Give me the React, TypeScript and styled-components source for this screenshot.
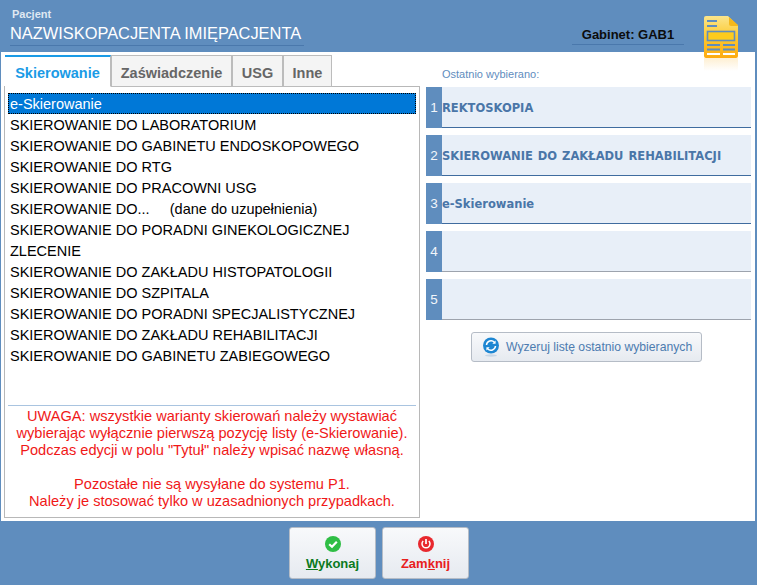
import React from 'react';
import styled, { createGlobalStyle } from 'styled-components';

const GlobalStyle = createGlobalStyle`
  html, body {
    margin: 0;
    padding: 0;
    background: #5f8dbe;
    font-family: "Liberation Sans", Arial, sans-serif;
  }
`;

const Page = styled.div`
  width: 757px;
  height: 585px;
  display: flex;
  flex-direction: column;
  overflow: hidden;
  background: #5f8dbe;
`;

const Header = styled.header`
  height: 52px;
  flex: none;
  display: flex;
  position: relative;
`;

const PatientBlock = styled.div`
  margin-left: 10px;
  width: 294px;
  display: flex;
  flex-direction: column;
`;

const PatientLabel = styled.div`
  font-size: 11px;
  font-weight: bold;
  color: #dfe8f2;
  margin: 8px 0 0 2px;
  line-height: 13px;
`;

const PatientName = styled.div`
  font-size: 16.4px;
  line-height: 20px;
  color: #fff;
  margin-top: 2px;
  height: 22px;
  border-bottom: 1px solid #4a78ac;
  white-space: nowrap;
`;

const Cabinet = styled.div`
  position: absolute;
  left: 572px;
  top: 25px;
  width: 112px;
  height: 19px;
  border-bottom: 1px solid #4a78ac;
  font-size: 13px;
  font-weight: bold;
  line-height: 19px;
  color: #0c0c0c;
  text-align: center;
`;

const DocIcon = styled.svg`
  position: absolute;
  left: 703px;
  top: 15px;
  width: 36px;
  height: 58px;
  z-index: 2;
`;

const Main = styled.main`
  height: 469px;
  flex: none;
  margin: 0 2px 0 1px;
  background: #fff;
  display: flex;
  padding: 3px 4px 3px 3px;
  box-sizing: border-box;
  gap: 6px;
`;

const LeftColumn = styled.section`
  width: 416px;
  flex: none;
  display: flex;
  flex-direction: column;
`;

const Tabs = styled.div`
  display: flex;
  height: 32px;
  flex: none;
  margin-bottom: -1px;
  position: relative;
  z-index: 1;
  padding-left: 1px;
`;

const Tab = styled.div<{ $active?: boolean; $width: number }>`
  width: ${(p) => p.$width}px;
  box-sizing: border-box;
  text-align: center;
  font-size: 14.5px;
  font-weight: bold;
  line-height: 28px;
  color: ${(p) => (p.$active ? '#1a9be6' : '#666')};
  background: ${(p) => (p.$active ? '#fff' : '#f4f4f4')};
  border: 1px solid #bcbcbc;
  border-left-width: ${(p) => (p.$active ? 0 : 1)}px;
  border-top: ${(p) => (p.$active ? '2px solid #1a9be6' : '1px solid #bcbcbc')};
  border-bottom: ${(p) => (p.$active ? '1px solid #fff' : '1px solid #bcbcbc')};
  padding-top: ${(p) => (p.$active ? 2 : 3)}px;
`;

const ListBox = styled.div`
  flex: 1;
  border: 1px solid #b8b8b8;
  display: flex;
  flex-direction: column;
  min-height: 0;
  padding: 6px 3px 3px;
`;

const List = styled.ul`
  list-style: none;
  margin: 0;
  padding: 0;
  flex: 1;
`;

const ListItem = styled.li<{ $selected?: boolean }>`
  height: 21px;
  line-height: 22px;
  font-size: 14.5px;
  padding-left: 2px;
  white-space: pre;
  color: ${(p) => (p.$selected ? '#fff' : '#000')};
  background: ${(p) => (p.$selected ? '#0078d7' : 'transparent')};
  outline: ${(p) => (p.$selected ? '1px dotted #000' : 'none')};
  outline-offset: -1px;
  box-sizing: border-box;
`;

const Warning = styled.div`
  height: 107px;
  flex: none;
  border-top: 1px solid #a9c4e0;
  color: #f01818;
  font-size: 14.6px;
  line-height: 17px;
  text-align: center;
  padding-top: 2px;
  box-sizing: content-box;
  margin-bottom: -1px;
`;

const RightColumn = styled.section`
  flex: 1;
  display: flex;
  flex-direction: column;
`;

const RecentLabel = styled.div`
  font-size: 11px;
  color: #5f8dbe;
  height: 20px;
  line-height: 14px;
  padding: 12px 0 0 16px;
`;

const RecentList = styled.div`
  display: flex;
  flex-direction: column;
  gap: 7px;
`;

const RecentRow = styled.div<{ $filled?: boolean }>`
  height: 41px;
  display: flex;
  background: #e8eff8;
  box-shadow: inset 0 -1px 0 ${(p) => (p.$filled ? '#3f6c9f' : '#9da3ad')};
`;

const RecentNumber = styled.div`
  width: 16px;
  flex: none;
  background: #5f8dbe;
  color: #f2f6fb;
  font-size: 13.5px;
  line-height: 41px;
  text-align: center;
`;

const RecentText = styled.div`
  font-family: "DejaVu Sans", Verdana, sans-serif;
  font-size: 11.5px;
  font-weight: bold;
  word-spacing: 1px;
  color: #4a76a8;
  line-height: 43px;
  height: 41px;
  white-space: nowrap;
`;

const ResetButton = styled.div`
  align-self: center;
  margin: 12px 4px 0 0;
  width: 231px;
  height: 30px;
  box-sizing: border-box;
  border: 1px solid #b5bcc6;
  border-radius: 3px;
  background: linear-gradient(#f8f9fb, #e6eaf0);
  display: flex;
  align-items: center;
  gap: 6px;
  padding-left: 10px;
  font-size: 12.2px;
  color: #4d7cb0;
  white-space: nowrap;
`;

const Footer = styled.footer`
  flex: 1;
  display: flex;
  gap: 6px;
  padding: 6px 0 0 289px;
  align-items: flex-start;
`;

const ActionButton = styled.div<{ $color: string }>`
  width: 87px;
  height: 52px;
  box-sizing: border-box;
  border: 1px solid #b5bcc6;
  border-radius: 3px;
  background: linear-gradient(#f8f9fb, #e6eaf0);
  display: flex;
  flex-direction: column;
  align-items: center;
  padding-top: 8px;
  gap: 3px;
  font-size: 13px;
  font-weight: bold;
  color: ${(p) => p.$color};
  line-height: 15px;
`;

const items = [
  'e-Skierowanie',
  'SKIEROWANIE DO LABORATORIUM',
  'SKIEROWANIE DO GABINETU ENDOSKOPOWEGO',
  'SKIEROWANIE DO RTG',
  'SKIEROWANIE DO PRACOWNI USG',
  'SKIEROWANIE DO...     (dane do uzupełnienia)',
  'SKIEROWANIE DO PORADNI GINEKOLOGICZNEJ',
  'ZLECENIE',
  'SKIEROWANIE DO ZAKŁADU HISTOPATOLOGII',
  'SKIEROWANIE DO SZPITALA',
  'SKIEROWANIE DO PORADNI SPECJALISTYCZNEJ',
  'SKIEROWANIE DO ZAKŁADU REHABILITACJI',
  'SKIEROWANIE DO GABINETU ZABIEGOWEGO',
];

const recent = ['REKTOSKOPIA', 'SKIEROWANIE DO ZAKŁADU REHABILITACJI', 'e-Skierowanie', '', ''];

const DocumentIcon = () => (
  <DocIcon viewBox="0 0 36 58">
    <defs>
      <linearGradient id="docFill" x1="0" y1="0" x2="0" y2="1">
        <stop offset="0" stopColor="#fbe58c" />
        <stop offset="0.5" stopColor="#fdc92e" />
        <stop offset="1" stopColor="#fdaa10" />
      </linearGradient>
      <linearGradient id="docShade" x1="0" y1="0" x2="0" y2="1">
        <stop offset="0" stopColor="#feefd2" />
        <stop offset="1" stopColor="#ffffff" />
      </linearGradient>
    </defs>
    <rect x="1" y="43" width="34" height="13" fill="url(#docShade)" />
    <path d="M3 1 H25 L35 11 V41 Q35 43 33 43 H3 Q1 43 1 41 V3 Q1 1 3 1 Z" fill="url(#docFill)" />
    <path d="M26 2 L35 10 V11 H28 Q26 11 26 9 Z" fill="#f5b81c" />
    <rect x="4" y="5" width="10" height="2" fill="#5f8dbe" />
    <rect x="4" y="10" width="10" height="2" fill="#5f8dbe" />
    <rect x="4.5" y="16.5" width="27" height="9" fill="#fdcb1d" stroke="#5f8dbe" strokeWidth="1.6" />
    <rect x="4" y="29" width="13" height="2" fill="#5f8dbe" />
    <rect x="20" y="29" width="12" height="2" fill="#5f8dbe" />
    <rect x="4" y="33.5" width="13" height="2" fill="#5f8dbe" />
    <rect x="20" y="33.5" width="12" height="2" fill="#5f8dbe" />
    <rect x="4" y="38" width="13" height="2" fill="#fff" />
    <rect x="20" y="38" width="12" height="2" fill="#fff" />
  </DocIcon>
);

const RefreshIcon = () => (
  <svg width="18" height="20" viewBox="0 0 18 20">
    <circle cx="9" cy="8.5" r="8" fill="#1d86d2" />
    <path d="M4.5 8 A4.6 4.6 0 0 1 12.4 5.2 M13.5 9 A4.6 4.6 0 0 1 5.6 11.8" fill="none" stroke="#fff" strokeWidth="1.5" />
    <path d="M13.6 3.4 V6.8 H10.3 Z M4.4 13.6 V10.2 H7.7 Z" fill="#fff" />
    <ellipse cx="9" cy="18.5" rx="6" ry="1.2" fill="#c6d6e6" />
  </svg>
);

const CheckIcon = () => (
  <svg width="16" height="17" viewBox="0 0 16 17">
    <circle cx="8" cy="8" r="8" fill="#2fbe45" />
    <path d="M4.2 8.2 L7 10.8 L11.8 5.8" fill="none" stroke="#fff" strokeWidth="2.2" />
  </svg>
);

const PowerIcon = () => (
  <svg width="16" height="17" viewBox="0 0 16 17">
    <circle cx="8" cy="8" r="8" fill="#e8282e" />
    <path d="M5.2 5 A4 4 0 1 0 10.8 5" fill="none" stroke="#fff" strokeWidth="1.5" />
    <path d="M8 3 V8" fill="none" stroke="#fff" strokeWidth="1.7" />
  </svg>
);

export default function App() {
  return (
    <Page>
      <GlobalStyle />
      <Header>
        <PatientBlock>
          <PatientLabel>Pacjent</PatientLabel>
          <PatientName>NAZWISKOPACJENTA IMIĘPACJENTA</PatientName>
        </PatientBlock>
        <Cabinet>Gabinet: GAB1</Cabinet>
        <DocumentIcon />
      </Header>
      <Main>
        <LeftColumn>
          <Tabs>
            <Tab $active $width={106}>Skierowanie</Tab>
            <Tab $width={121}>Zaświadczenie</Tab>
            <Tab $width={51}>USG</Tab>
            <Tab $width={49}>Inne</Tab>
          </Tabs>
          <ListBox>
            <List>
              {items.map((item, i) => (
                <ListItem key={item} $selected={i === 0}>{item}</ListItem>
              ))}
            </List>
            <Warning>
              UWAGA: wszystkie warianty skierowań należy wystawiać
              <br />
              wybierając wyłącznie pierwszą pozycję listy (e-Skierowanie).
              <br />
              Podczas edycji w polu "Tytuł" należy wpisać nazwę własną.
              <br />
              <br />
              Pozostałe nie są wysyłane do systemu P1.
              <br />
              Należy je stosować tylko w uzasadnionych przypadkach.
            </Warning>
          </ListBox>
        </LeftColumn>
        <RightColumn>
          <RecentLabel>Ostatnio wybierano:</RecentLabel>
          <RecentList>
            {recent.map((text, i) => (
              <RecentRow key={i} $filled={text !== ''}>
                <RecentNumber>{i + 1}</RecentNumber>
                <RecentText>{text}</RecentText>
              </RecentRow>
            ))}
          </RecentList>
          <ResetButton>
            <RefreshIcon />
            Wyzeruj listę ostatnio wybieranych
          </ResetButton>
        </RightColumn>
      </Main>
      <Footer>
        <ActionButton $color="#0b7a1e">
          <CheckIcon />
          <span><u>W</u>ykonaj</span>
        </ActionButton>
        <ActionButton $color="#e8201c">
          <PowerIcon />
          <span>Zam<u>k</u>nij</span>
        </ActionButton>
      </Footer>
    </Page>
  );
}
